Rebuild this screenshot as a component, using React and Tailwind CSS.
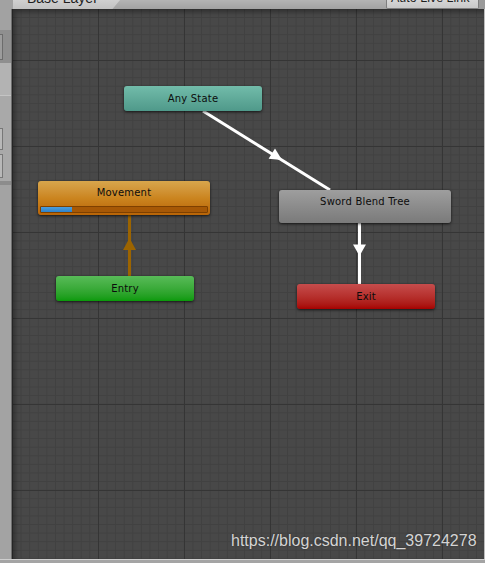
import React from "react";

const nodeText = "font-['DejaVu_Sans',sans-serif] text-[10px] leading-[12px] text-[#0c0c0c] tracking-[0.2px]";

const StateNode = ({ x, y, w, h, className, children, label }) => (
  <div
    className={`absolute rounded-[3px] shadow-[0_1px_3px_rgba(0,0,0,0.7)] ${className}`}
    style={{ left: x, top: y, width: w, height: h }}
  >
    {label}
    {children}
  </div>
);

export default function App() {
  return (
    <div className="w-[485px] h-[563px] overflow-hidden bg-[#a6a6a6] font-['Liberation_Sans',Arial,sans-serif]">
      {/* top bar */}
      <div className="flex h-[9px] overflow-hidden bg-gradient-to-b from-[#b4b4b4] to-[#a2a2a2]">
        <div className="w-[13px] bg-[#a2a2a2]" />
        <div className="relative w-[107px] bg-gradient-to-b from-[#d0d0d0] to-[#c2c2c2] [clip-path:polygon(0_0,100%_0,93%_100%,0_100%)]">
          <span className="absolute left-[14px] top-[-9px] text-[14px] leading-[14px] text-[#1e1e1e] whitespace-nowrap">
            Base Layer
          </span>
        </div>
        <div className="flex-1" />
        <div className="relative w-[93px] bg-gradient-to-b from-[#d6d6d6] to-[#c8c8c8] border-x border-b border-[#7e7e7e] rounded-b-[2px]">
          <span className="absolute left-[4px] top-[-8px] text-[12.5px] leading-[12.5px] text-[#1e1e1e] whitespace-nowrap">
            Auto Live Link
          </span>
        </div>
        <div className="w-[6px] bg-[#9a9a9a]" />
      </div>

      <div className="flex h-[550px]">
        {/* left inspector strip */}
        <div className="w-[12px] flex flex-col border-r border-[#6f6f6f]">
          <div className="h-[21px] bg-[#a2a2a2]" />
          <div className="h-[33px] bg-[#8f8f8f] flex items-center">
            <div className="w-[3px] h-[26px] bg-[#9c9c9c] border-y border-r border-[#6c6c6c]" />
          </div>
          <div className="h-[32px] bg-[#b3b3b3]" />
          <div className="h-[32px] bg-[#a9a9a9] border-t border-[#c4c4c4]" />
          <div className="h-[24px] bg-[#a9a9a9] flex items-center">
            <div className="w-[3px] h-[22px] bg-[#b8b8b8] border-y border-r border-[#777]" />
          </div>
          <div className="h-[30px] bg-[#a9a9a9] flex items-center">
            <div className="w-[3px] h-[24px] bg-[#b8b8b8] border-y border-r border-[#777]" />
          </div>
          <div className="h-[4px] bg-[#8c8c8c]" />
          <div className="flex-1 bg-[#a3a3a3]" />
        </div>

        {/* graph canvas */}
        <div className="relative w-[472px] overflow-hidden bg-[#484848] bg-[linear-gradient(to_right,#353535_1px,transparent_1px),linear-gradient(to_bottom,#353535_1px,transparent_1px),linear-gradient(to_right,#414141_1px,transparent_1px),linear-gradient(to_bottom,#414141_1px,transparent_1px)] bg-[length:86px_86px,86px_86px,8.6px_8.6px,8.6px_8.6px] bg-[position:0_51px,0_51px,0_8px,0_8px]">
          <div className="absolute inset-0 shadow-[inset_3px_3px_5px_rgba(0,0,0,0.35)] pointer-events-none" />

          <svg className="absolute inset-0" width="472" height="550" viewBox="0 0 472 550">
            {/* Any State -> Sword Blend Tree */}
            <line x1="191" y1="102" x2="318" y2="181" stroke="#ffffff" strokeWidth="3" />
            <polygon points="270,151 256.6,149.8 263,139.6" fill="#ffffff" />
            {/* Sword Blend Tree -> Exit */}
            <line x1="347.5" y1="214" x2="347.5" y2="275" stroke="#ffffff" strokeWidth="3" />
            <polygon points="347.5,247 341,235.5 354,235.5" fill="#ffffff" />
            {/* Entry -> Movement */}
            <line x1="117.5" y1="206" x2="117.5" y2="267" stroke="#9c6400" strokeWidth="3" />
            <polygon points="117.5,229 111,241 124,241" fill="#9c6400" />
          </svg>

          <StateNode
            x={112}
            y={77}
            w={138}
            h={25}
            className="bg-gradient-to-b from-[#72bcaa] to-[#4f998a] flex items-center justify-center"
            label={<span className={nodeText}>Any State</span>}
          />

          <StateNode
            x={26}
            y={172}
            w={172}
            h={34}
            className="bg-gradient-to-b from-[#d8a64c] via-[#cb851f] to-[#b86406] flex flex-col items-center"
            label={<span className={`${nodeText} mt-[6px]`}>Movement</span>}
          >
            <div className="mt-[7px] w-[168px] h-[7px] rounded-[1px] bg-[#a65806] border border-[#7e4000] flex">
              <div className="w-[31px] h-full bg-gradient-to-b from-[#4a9ee0] to-[#2f82c8]" />
            </div>
          </StateNode>

          <StateNode
            x={44}
            y={267}
            w={138}
            h={25}
            className="bg-gradient-to-b from-[#58bb58] to-[#099a09] flex items-center justify-center"
            label={<span className={nodeText}>Entry</span>}
          />

          <StateNode
            x={267}
            y={181}
            w={172}
            h={33}
            className="bg-gradient-to-b from-[#9e9e9e] to-[#7a7a7a] flex flex-col items-center"
            label={<span className={`${nodeText} mt-[6px]`}>Sword Blend Tree</span>}
          />

          <StateNode
            x={285}
            y={275}
            w={138}
            h={25}
            className="bg-gradient-to-b from-[#c64c4c] to-[#a60000] flex items-center justify-center"
            label={<span className={nodeText}>Exit</span>}
          />

          <span className="absolute left-[219px] top-[523px] text-[16px] leading-[18px] text-[#d4d4d4] whitespace-nowrap [text-shadow:0_0_2px_rgba(0,0,0,0.4)]">
            https://blog.csdn.net/qq_39724278
          </span>
        </div>

        <div className="w-[1px] bg-[#bdbdbd]" />
      </div>

      <div className="h-[4px] bg-[#a4a4a4] border-t border-[#cfcfcf]" />
    </div>
  );
}
